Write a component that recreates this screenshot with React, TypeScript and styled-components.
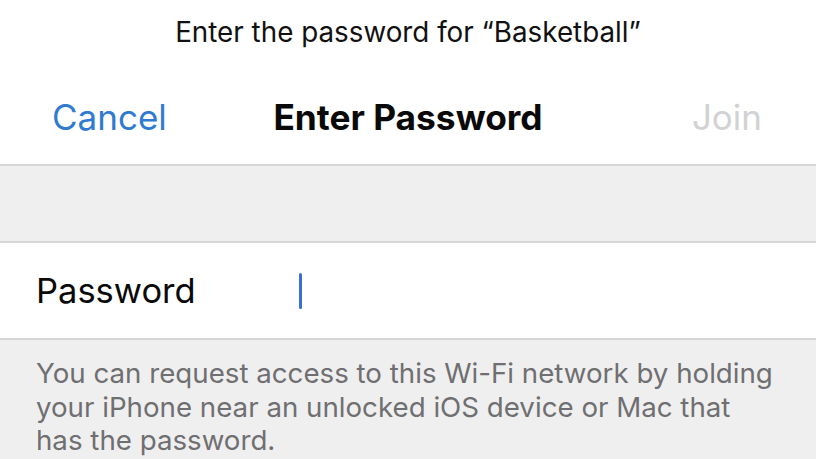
import React from "react";
import styled, { createGlobalStyle } from "styled-components";

const Global = createGlobalStyle`
  html, body { margin: 0; padding: 0; background: #efefef; }
  body { font-family: Inter, "Liberation Sans", sans-serif; -webkit-font-smoothing: antialiased; }
  #root { width: 816px; height: 459px; overflow: hidden; }
`;

const Page = styled.div`
  width: 816px;
  height: 459px;
  display: flex;
  flex-direction: column;
  background: #efefef;
`;

const Header = styled.header`
  background: #ffffff;
  height: 164px;
  display: flex;
  flex-direction: column;
  border-bottom: 2px solid #d6d6d6;
`;

const Prompt = styled.div`
  height: 64px;
  padding-bottom: 6px;
  display: flex;
  align-items: center;
  justify-content: center;
  font-size: 27.8px;
  color: #111;
`;

const NavBar = styled.nav`
  flex: 1;
  display: grid;
  grid-template-columns: 1fr auto 1fr;
  align-items: center;
  padding: 0 54px 0 52px;
`;

const NavButton = styled.span<{ $align: "left" | "right"; $disabled?: boolean }>`
  font-size: 35px;
  color: ${(p) => (p.$disabled ? "#d2d2d2" : "#2f7bd0")};
  justify-self: ${(p) => (p.$align === "left" ? "start" : "end")};
`;

const NavTitle = styled.span`
  font-size: 35.3px;
  font-weight: 700;
  color: #0a0a0a;
  margin-left: 2px;
`;

const Spacer = styled.div`
  height: 75px;
  background: #efefef;
  border-bottom: 2px solid #d6d6d6;
`;

const FieldRow = styled.div`
  height: 95px;
  background: #ffffff;
  display: flex;
  align-items: center;
  padding-left: 36px;
  border-bottom: 2px solid #d6d6d6;
`;

const FieldLabel = styled.span`
  width: 263px;
  font-size: 34.5px;
  color: #0a0a0a;
`;

const Caret = styled.span`
  display: block;
  width: 3px;
  height: 36px;
  border-radius: 2px;
  background: #3a6fd8;
`;

const Footnote = styled.p`
  margin: 0;
  padding: 17px 40px 0 36px;
  font-size: 27.7px;
  line-height: 33.5px;
  color: #6f6f72;
`;

export default function App() {
  return (
    <>
      <Global />
      <Page>
        <Header>
          <Prompt>Enter the password for “Basketball”</Prompt>
          <NavBar>
            <NavButton $align="left">Cancel</NavButton>
            <NavTitle>Enter Password</NavTitle>
            <NavButton $align="right" $disabled>
              Join
            </NavButton>
          </NavBar>
        </Header>
        <Spacer />
        <FieldRow>
          <FieldLabel>Password</FieldLabel>
          <Caret />
        </FieldRow>
        <Footnote>
          You can request access to this Wi-Fi network by holding your iPhone near an unlocked iOS device or Mac that
          has the password.
        </Footnote>
      </Page>
    </>
  );
}
